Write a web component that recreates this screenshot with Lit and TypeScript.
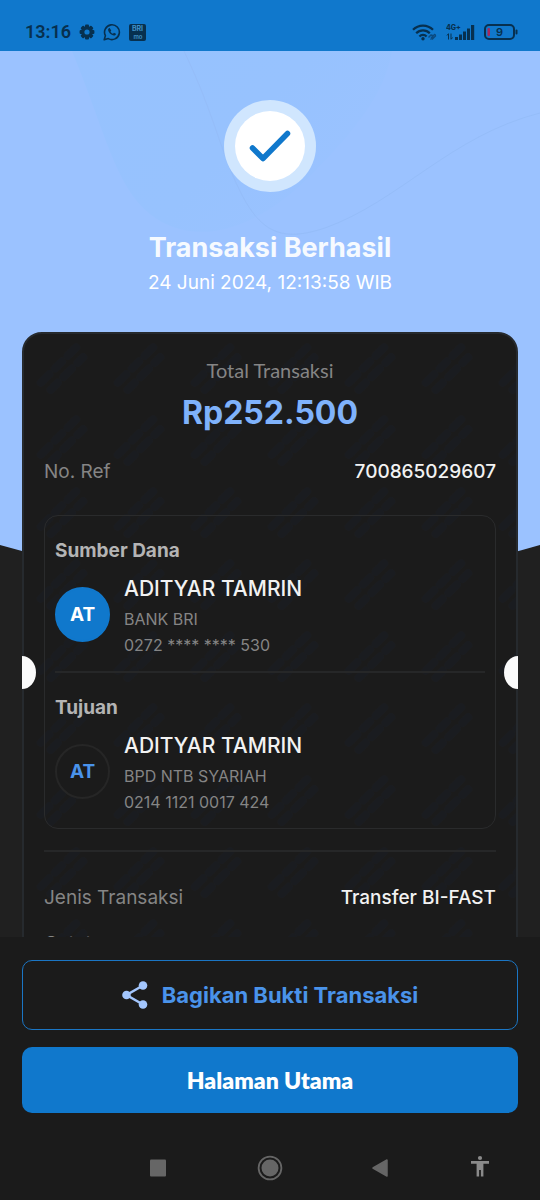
import { LitElement, html, css, svg } from "lit";
import { customElement, property } from "lit/decorators.js";

interface Party {
  heading: string;
  initials: string;
  name: string;
  bank: string;
  account: string;
  filled: boolean;
}

const parties: Party[] = [
  {
    heading: "Sumber Dana",
    initials: "AT",
    name: "ADITYAR TAMRIN",
    bank: "BANK BRI",
    account: "0272 **** **** 530",
    filled: true,
  },
  {
    heading: "Tujuan",
    initials: "AT",
    name: "ADITYAR TAMRIN",
    bank: "BPD NTB SYARIAH",
    account: "0214 1121 0017 424",
    filled: false,
  },
];

@customElement("status-bar")
class StatusBar extends LitElement {
  static styles = css`
    :host {
      display: flex;
      align-items: center;
      justify-content: space-between;
      height: 51px;
      padding: 13px 22px 0 25px;
      box-sizing: border-box;
      background: #1078cc;
      color: #07304f;
      font-family: Inter, sans-serif;
    }
    .group {
      display: flex;
      align-items: center;
      gap: 8px;
    }
    .group.right {
      gap: 9px;
    }
    .time {
      font-family: Roboto, sans-serif;
      font-size: 18px;
      line-height: 20px;
      font-weight: 600;
    }
    svg {
      display: block;
    }
  `;

  render() {
    const teeth = [0, 45, 90, 135];
    return html`
      <div class="group">
        <span class="time">13:16</span>
        <svg width="16" height="16" viewBox="0 0 16 16" aria-hidden="true">
          ${teeth.map(
            (a) =>
              svg`<rect x="6" y="0.6" width="4" height="14.8" rx="1" fill="currentColor" transform=${`rotate(${a} 8 8)`} />`
          )}
          <circle cx="8" cy="8" r="5.8" fill="currentColor" />
          <circle cx="8" cy="8" r="2.6" fill="#1078cc" />
        </svg>
        <svg width="18" height="18" viewBox="0 0 18 18" fill="none" aria-hidden="true">
          <path
            d="M1.2 16.8l1.2-4.2A7.4 7.4 0 1 1 5.3 15.6z"
            stroke="currentColor"
            stroke-width="1.6"
            stroke-linejoin="round"
          />
          <path
            d="M6.6 4.9c-.5-.1-1.4.5-1.5 1.7-.1 2.7 3.6 6.3 6.3 5.9 1.2-.2 1.7-1.2 1.5-1.7l-1.9-1-1 1c-1.1-.4-2.1-1.4-2.5-2.4l.8-.9z"
            fill="currentColor"
          />
        </svg>
        <svg width="17" height="17" viewBox="0 0 17 17" aria-hidden="true">
          <rect width="17" height="17" rx="2" fill="currentColor" />
          <text x="8.5" y="7" text-anchor="middle" font-size="7" font-weight="700" fill="#3f90c8">BRI</text>
          <text x="9" y="15" text-anchor="middle" font-size="6" font-weight="600" fill="#3f90c8">mo</text>
        </svg>
      </div>
      <div class="group right">
        <svg width="25" height="17" viewBox="0 0 25 17" fill="none" aria-hidden="true">
          <g stroke="currentColor" stroke-width="2.2">
            <path d="M1 5.8a14 14 0 0 1 20 0" />
            <path d="M4.2 9.2a9.5 9.5 0 0 1 13.6 0" />
            <path d="M7.4 12.4a5 5 0 0 1 7.2 0" />
          </g>
          <circle cx="11" cy="14.8" r="1.7" fill="currentColor" />
          <path
            d="M16.5 13.5l2.5-2.5a2 2 0 0 1 2 2l-2.5 2.5M19 14l3.5-3.5a1.5 1.5 0 0 1 1 1.5l-3.5 3.5"
            stroke="#0b4a80"
            stroke-width="1.4"
          />
        </svg>
        <svg width="29" height="17" viewBox="0 0 29 17" aria-hidden="true">
          <text x="0" y="6" font-size="7" font-weight="800" fill="currentColor">4G+</text>
          <path
            d="M2.5 15.5V10M1 11.5L2.5 9.5M5 9.5V15M6.5 13.5L5 15.5"
            stroke="currentColor"
            fill="none"
          />
          <path
            d="M9 16v-3h3v3zM13 16V10.5h3V16zM17 16V7.5h3V16zM21 16V4.5h3V16zM25 16V1h3.2v15z"
            fill="currentColor"
          />
        </svg>
        <svg width="34" height="16" viewBox="0 0 34 16" aria-hidden="true">
          <rect x="1" y="1" width="29" height="14" rx="4" fill="none" stroke="currentColor" stroke-width="2" />
          <rect x="31.5" y="5.5" width="2" height="5" rx="1" fill="currentColor" />
          <rect x="3.5" y="4" width="2.5" height="8" rx="1" fill="#a8285c" />
          <text x="15.5" y="12" text-anchor="middle" font-size="11" font-weight="600" fill="currentColor">9</text>
        </svg>
      </div>
    `;
  }
}

@customElement("party-info")
class PartyInfo extends LitElement {
  @property({ attribute: false }) party!: Party;

  static styles = css`
    :host {
      display: flex;
      flex-direction: column;
      gap: 10px;
      padding: 23px 0 13px;
    }
    .heading {
      margin: 0;
      font-size: 19px;
      line-height: 24px;
      font-weight: 700;
      color: #b4b4b4;
    }
    .row {
      display: flex;
      align-items: flex-start;
      gap: 14px;
    }
    .avatar {
      flex: none;
      display: grid;
      place-items: center;
      box-sizing: border-box;
      width: 55px;
      height: 55px;
      margin-top: 14px;
      border: 2px solid #262626;
      border-radius: 50%;
      background: #1b1b1b;
      color: #4a93ea;
      font-size: 19px;
      font-weight: 700;
    }
    .avatar.filled {
      border-color: #1078cc;
      background: #1078cc;
      color: #ffffff;
    }
    .name {
      margin: 0 0 1px;
      font-size: 21px;
      line-height: 32px;
      font-weight: 500;
      color: #f2f2f2;
    }
    .detail {
      margin: 0;
      font-size: 16px;
      line-height: 26px;
      color: #858585;
    }
  `;

  render() {
    const p = this.party;
    return html`
      <h2 class="heading">${p.heading}</h2>
      <div class="row">
        <span class="avatar ${p.filled ? "filled" : ""}">${p.initials}</span>
        <div>
          <p class="name">${p.name}</p>
          <p class="detail">${p.bank}</p>
          <p class="detail">${p.account}</p>
        </div>
      </div>
    `;
  }
}

@customElement("nav-bar")
class NavBar extends LitElement {
  static styles = css`
    :host {
      display: grid;
      grid-template-columns: 102fr 112fr 112fr 108fr 92fr 14fr;
      align-items: center;
      height: 64px;
      background: #1b1b1b;
      box-sizing: border-box;
    }
    .key {
      display: grid;
      place-items: center;
      padding: 0;
      border: 0;
      background: none;
      color: #666666;
    }
    .recent {
      grid-column: 2;
    }
    .access {
      color: #8a8a8a;
    }
  `;

  render() {
    return html`
      <button class="key recent" aria-label="Recent apps">
        <svg width="26" height="26" viewBox="0 0 26 26">
          <rect x="5" y="4.5" width="16" height="17" rx="1" fill="currentColor" />
        </svg>
      </button>
      <button class="key" aria-label="Home">
        <svg width="26" height="26" viewBox="0 0 26 26">
          <circle cx="13" cy="13" r="11.4" fill="none" stroke="currentColor" stroke-width="1.8" />
          <circle cx="13" cy="13" r="8.5" fill="currentColor" />
        </svg>
      </button>
      <button class="key" aria-label="Back">
        <svg width="26" height="26" viewBox="0 0 26 26">
          <path
            d="M6 13L20 5v16z"
            fill="currentColor"
            stroke="currentColor"
            stroke-width="1.5"
            stroke-linejoin="round"
          />
        </svg>
      </button>
      <button class="key access" aria-label="Accessibility">
        <svg width="26" height="26" viewBox="0 0 26 26">
          <circle cx="13" cy="3" r="2.1" fill="currentColor" />
          <path d="M4 6h18v2.8h-5.6v12.7h-2.5v-6.5h-1.8v6.5H9.6V8.8H4z" fill="currentColor" />
        </svg>
      </button>
    `;
  }
}

@customElement("app-root")
class AppRoot extends LitElement {
  static styles = css`
    :host {
      display: flex;
      flex-direction: column;
      height: 100vh;
      background: #202020;
      font-family: Inter, sans-serif;
    }
    .scroller {
      flex: 1;
      min-height: 0;
      display: grid;
      overflow-x: hidden;
      overflow-y: auto;
      scrollbar-width: none;
    }
    .backdrop,
    .content {
      grid-area: 1 / 1;
      min-width: 0;
    }
    .backdrop {
      display: block;
      width: 100%;
      height: 540px;
    }
    .content {
      position: relative;
      padding: 49px 22px 24px;
    }
    .result {
      display: flex;
      flex-direction: column;
      align-items: center;
      padding-bottom: 35px;
      text-align: center;
      color: #ffffff;
    }
    .check {
      display: block;
      margin-bottom: 38px;
    }
    .title {
      margin: 0 0 3px;
      font-size: 27px;
      line-height: 36px;
      font-weight: 700;
      color: #f6faff;
    }
    .date {
      margin: 0;
      font-size: 19px;
      line-height: 28px;
    }
    .card {
      display: grid;
      border: 2px solid #262a2e;
      border-radius: 20px;
      background: #1b1b1b;
    }
    .watermark,
    .details {
      grid-area: 1 / 1;
      min-width: 0;
    }
    .watermark {
      width: 100%;
      height: 0;
      min-height: 100%;
    }
    .details {
      position: relative;
      padding: 24px 20px;
    }
    .total-label {
      margin: 0 0 11px;
      font-family: Lato, sans-serif;
      font-size: 20px;
      line-height: 24px;
      text-align: center;
      color: #858585;
    }
    .total {
      margin: 0 0 27px;
      font-size: 32px;
      line-height: 40px;
      font-weight: 700;
      text-align: center;
      color: #7fb2fb;
    }
    .pair {
      display: flex;
      justify-content: space-between;
      margin: 0 0 22px;
      font-size: 19px;
      line-height: 24px;
    }
    .pair dt {
      color: #858585;
    }
    .pair dd {
      margin: 0;
      font-weight: 500;
      color: #f2f2f2;
    }
    .pairs {
      margin: 0;
    }
    .parties {
      margin: 31px 0 21px;
      padding: 0 10px;
      border: 1px solid #2a2b2c;
      border-radius: 14px;
    }
    .rule {
      height: 2px;
      background: #262728;
    }
    .perforation {
      position: relative;
    }
    .perforation::before,
    .perforation::after {
      content: "";
      position: absolute;
      top: -15px;
      width: 14px;
      height: 33px;
      background: #fafafa;
    }
    .perforation::before {
      left: -33px;
      border-radius: 0 100% 100% 0 / 0 50% 50% 0;
    }
    .perforation::after {
      right: -33px;
      border-radius: 100% 0 0 100% / 50% 0 0 50%;
    }
    .after-rule {
      margin-top: 34px;
    }
    .actions {
      display: flex;
      flex-direction: column;
      gap: 17px;
      padding: 23px 22px;
      background: #1b1b1b;
    }
    .button {
      display: flex;
      align-items: center;
      justify-content: center;
      gap: 14px;
      min-height: 66px;
      padding: 0 16px;
      border: 0;
      border-radius: 10px;
      background: #1078cc;
      color: #ffffff;
      font-family: Lato, sans-serif;
      font-size: 23px;
      line-height: 28px;
      font-weight: 800;
    }
    .button.outline {
      min-height: 70px;
      border: 1px solid #1b76c4;
      background: #1b1b1b;
      color: #4a93ea;
      font-family: Inter, sans-serif;
      font-size: 22px;
      font-weight: 700;
    }
  `;

  private backdrop() {
    return html`
      <svg class="backdrop" viewBox="0 0 540 540" preserveAspectRatio="none" aria-hidden="true">
        <defs>
          <linearGradient id="petal" x1="0" y1="0" x2="1" y2="0.5">
            <stop offset="0" stop-color="#96c2fe" />
            <stop offset="0.6" stop-color="#97c2fe" />
            <stop offset="1" stop-color="#9ac2ff" />
          </linearGradient>
        </defs>
        <path d="M0 0H540V494Q410 532 270 532T0 494z" fill="#9bc2ff" />
        <path
          d="M72 0C105 80 115 135 150 163C190 195 250 185 310 125C360 75 385 40 392 0z"
          fill="url(#petal)"
        />
        <path
          d="M184 0C215 65 220 100 240 140C262 185 285 190 325 177C400 150 450 85 540 62"
          fill="none"
          stroke="#95bdf9"
          stroke-width="1"
        />
      </svg>
    `;
  }

  private watermark() {
    return html`
      <svg class="watermark" aria-hidden="true">
        <defs>
          <pattern id="marks" width="77" height="72" patternUnits="userSpaceOnUse">
            <g
              transform="rotate(-45 38 36)"
              fill="none"
              stroke="#1a1c20"
              stroke-width="8"
              stroke-linecap="round"
            >
              <path d="M14 30h12M34 30h10M52 30h12M16 42h10M34 42h12M54 42h8" />
            </g>
          </pattern>
        </defs>
        <rect width="100%" height="100%" rx="18" fill="url(#marks)" />
      </svg>
    `;
  }

  render() {
    return html`
      <status-bar></status-bar>
      <main class="scroller">
        ${this.backdrop()}
        <div class="content">
          <header class="result">
            <svg class="check" width="92" height="92" viewBox="0 0 92 92" aria-hidden="true">
              <circle cx="46" cy="46" r="46" fill="#d0e6fe" />
              <circle cx="46" cy="46" r="35" fill="#ffffff" />
              <path
                d="M28.5 48L39 58.5L63.5 33.5"
                fill="none"
                stroke="#1078cc"
                stroke-width="5.5"
                stroke-linecap="round"
                stroke-linejoin="round"
              />
            </svg>
            <h1 class="title">Transaksi Berhasil</h1>
            <p class="date">24 Juni 2024, 12:13:58 WIB</p>
          </header>
          <section class="card">
            ${this.watermark()}
            <div class="details">
              <p class="total-label">Total Transaksi</p>
              <p class="total">Rp252.500</p>
              <dl class="pairs">
                <div class="pair"><dt>No. Ref</dt><dd>700865029607</dd></div>
              </dl>
              <div class="parties">
                <party-info .party=${parties[0]}></party-info>
                <div class="rule perforation"></div>
                <party-info .party=${parties[1]}></party-info>
              </div>
              <div class="rule"></div>
              <dl class="pairs after-rule">
                <div class="pair"><dt>Jenis Transaksi</dt><dd>Transfer BI-FAST</dd></div>
                <div class="pair"><dt>Catatan</dt><dd>-</dd></div>
              </dl>
            </div>
          </section>
        </div>
      </main>
      <footer class="actions">
        <button class="button outline">
          <svg width="26" height="28" viewBox="0 0 26 28" aria-hidden="true">
            <path d="M21 4.5L4.5 14L21 23.5" fill="none" stroke="#a3c6fd" stroke-width="2.5" />
            <g fill="#a3c6fd">
              <circle cx="21" cy="4.5" r="4.3" />
              <circle cx="4.5" cy="14" r="4.3" />
              <circle cx="21" cy="23.5" r="4.3" />
            </g>
          </svg>
          Bagikan Bukti Transaksi
        </button>
        <button class="button">Halaman Utama</button>
      </footer>
      <nav-bar></nav-bar>
    `;
  }
}
